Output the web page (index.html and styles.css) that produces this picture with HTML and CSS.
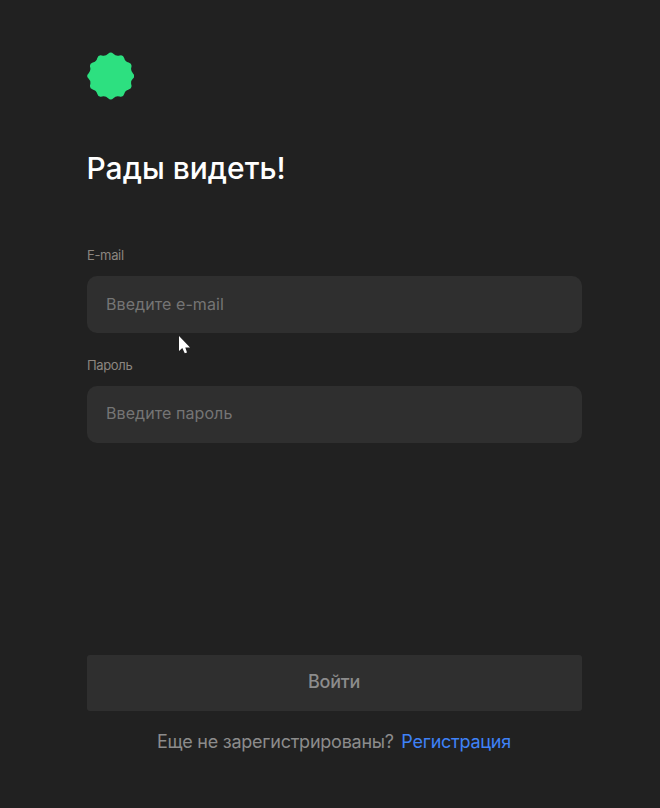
FILE: index.html
```html
<!DOCTYPE html>
<html lang="ru">
<head>
<meta charset="utf-8">
<title>Вход</title>
<link rel="stylesheet" href="styles.css">
</head>
<body>
<main class="login">
  <svg class="logo" viewBox="-24 -24 48 48" aria-hidden="true">
    <path d="M22.5-2.65Q25.2 0 22.5 2.65T20.81 8.95T18.16 13.55T13.55 18.16T8.95 20.81T2.65 22.5T-2.65 22.5T-8.95 20.81T-13.55 18.16T-18.16 13.55T-20.81 8.95T-22.5 2.65T-22.5-2.65T-20.81-8.95T-18.16-13.55T-13.55-18.16T-8.95-20.81T-2.65-22.5T2.65-22.5T8.95-20.81T13.55-18.16T18.16-13.55T20.81-8.95T22.5-2.65Z"/>
  </svg>
  <h1 class="title"><span>Рады видеть!</span></h1>
  <form class="form">
    <label class="label" for="email"><span>E-mail</span></label>
    <input class="input" id="email" type="email" placeholder="Введите e-mail">
    <label class="label" for="password"><span>Пароль</span></label>
    <input class="input input-password" id="password" type="password" placeholder="Введите пароль">
    <button class="submit" type="button"><span>Войти</span></button>
  </form>
  <p class="signup"><span>Еще не зарегистрированы?</span><a class="link" href="#">Регистрация</a></p>
</main>
<svg class="cursor" viewBox="0 0 12 18" aria-hidden="true">
  <path d="M1 0V15L4.3 12 5.8 15.2 6.8 17.3 9 16.5 7.3 11.5H12Z"/>
</svg>
</body>
</html>
```
FILE: styles.css
```css
* {
  box-sizing: border-box;
}

body {
  margin: 0;
  min-height: 808px;
  background: #212121;
  color: #8c8c8c;
  font-family: Inter, "Liberation Sans", sans-serif;
}

.login {
  display: flex;
  flex-direction: column;
  width: 495px;
  height: 808px;
  margin-left: 87px;
  padding: 52px 0 54px;
}

.logo {
  display: block;
  width: 47.5px;
  height: 48px;
  margin-left: -0.3px;
  fill: #2de080;
}

.title {
  margin: 48px 0 0 -0.5px;
  color: #fff;
  font-size: 30px;
  font-weight: 550;
  letter-spacing: 0;
  line-height: 40px;
}

.form {
  display: flex;
  flex: 1;
  flex-direction: column;
  margin-top: 59px;
}

.label {
  margin-bottom: 12px;
  color: #8c8680;
  font-size: 13px;
  letter-spacing: -0.35px;
  line-height: 17px;
}

.input {
  height: 57px;
  margin: 0 0 24px;
  padding: 0 19px 2px;
  border: 0;
  border-radius: 10px;
  outline: 0;
  background: #2f2f2f;
  color: #fff;
  font: 16px Inter, "Liberation Sans", sans-serif;
  letter-spacing: 0.08px;
}

.input-password {
  padding-bottom: 4px;
}

.input::placeholder {
  color: #757575;
}

.submit {
  height: 56px;
  margin-top: auto;
  padding: 0 1px 3px 0;
  border: 0;
  border-radius: 3px;
  background: #2f2f2f;
  color: #8c8c8c;
  font: 500 18px Inter, "Liberation Sans", sans-serif;
  letter-spacing: -0.2px;
}

.signup {
  display: flex;
  justify-content: center;
  gap: 7.5px;
  margin: 19px 1px 0 0;
  font-size: 18px;
  letter-spacing: -0.24px;
  line-height: 24px;
}

.link {
  color: #3f82f7;
  text-decoration: none;
}

.cursor {
  position: absolute;
  top: 336px;
  left: 178px;
  width: 12px;
  height: 18px;
  fill: #fff;
  pointer-events: none;
}
```
